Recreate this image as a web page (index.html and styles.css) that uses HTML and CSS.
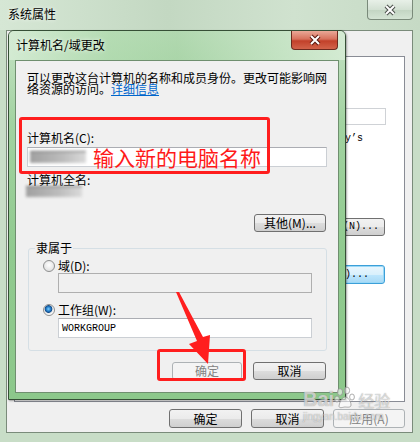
FILE: index.html
```html
<!DOCTYPE html>
<html lang="zh-CN">
<head>
  <meta charset="UTF-8" />
  <title>计算机名/域更改</title>
  <link rel="stylesheet" href="styles.css">
</head>
<body>
  <div class="win">
    <div class="win-title">
      <span>系统属性</span>
      <div class="close-btn grey">
        <svg width="14" height="12" viewBox="0 0 14 12"><path d="M3 2 L11 10 M11 2 L3 10" stroke="#4a4f4a" stroke-width="4"/><path d="M3 2 L11 10 M11 2 L3 10" stroke="#fff" stroke-width="2"/></svg>
      </div>
    </div>

    <div class="win-client">
      <div class="tab-page">
        <div class="tp-box"></div>
        <div class="tp-text">party’s</div>
        <div class="tp-btn">(N)...</div>
        <div class="tp-btn focus">(C)...</div>
      </div>
      <div class="win-buttons">
        <div class="btn w73">确定</div>
        <div class="btn w73">取消</div>
        <div class="btn w72 off">应用(A)</div>
      </div>
    </div>

    <div class="dlg">
      <div class="dlg-title">
        <span>计算机名/域更改</span>
        <div class="close-btn red">
          <svg width="14" height="12" viewBox="0 0 14 12"><path d="M3 2 L11 10 M11 2 L3 10" stroke="#5a1a10" stroke-width="4"/><path d="M3 2 L11 10 M11 2 L3 10" stroke="#fff" stroke-width="2"/></svg>
        </div>
      </div>
      <div class="dlg-client">
        <p class="desc">可以更改这台计算机的名称和成员身份。更改可能影响网<br>络资源的访问。<a class="link">详细信息</a></p>

        <div class="label first">计算机名(C):</div>
        <div class="tb name"><span class="blur"></span></div>

        <div class="label second">计算机全名:</div>
        <div class="blur full"></div>

        <div class="row-right">
          <div class="btn w72">其他(M)...</div>
        </div>

        <fieldset class="group">
          <legend>隶属于</legend>
          <div class="radio-row r1"><span class="radio"></span>域(D):</div>
          <div class="tb off domain"></div>
          <div class="radio-row r2"><span class="radio checked"></span>工作组(W):</div>
          <div class="tb domain wg">WORKGROUP</div>
        </fieldset>

        <div class="row-right bottom">
          <div class="btn w70 off">确定</div>
          <div class="btn w73">取消</div>
        </div>
      </div>
    </div>

    <!-- annotations -->
    <div class="mark m1"></div>
    <div class="mark m2"></div>
    <div class="hint">输入新的电脑名称</div>
    <svg class="arrow" width="420" height="442" viewBox="0 0 420 442">
      <polygon points="176,292 179,292 203,337 210,335 208,364 189,344 197,341" fill="#ff1e1e"/>
    </svg>

    <div class="wm">
      <div class="wm-top">
        <span class="wm-bai">Bai</span>
        <svg width="22" height="24" viewBox="0 0 22 24">
          <g fill="rgba(255,255,255,0.55)" stroke="rgba(140,140,140,0.7)" stroke-width="1">
            <ellipse cx="6" cy="6" rx="2.6" ry="3.4"/>
            <ellipse cx="13" cy="4.5" rx="2.6" ry="3.4"/>
            <ellipse cx="3" cy="13" rx="2.4" ry="3"/>
            <ellipse cx="18" cy="11" rx="2.4" ry="3"/>
            <path d="M5 20 C6 14 9 11 11 11 C14 11 17 15 17 19 C17 22 13 21 11 21 C9 21 5 23 5 20 Z"/>
          </g>
        </svg>
        <span class="wm-jy">经验</span>
      </div>
      <div class="wm-url">jingyan.baidu.com</div>
    </div>
  </div>
</body>
</html>
```

FILE: styles.css
```css
body {
  margin: 0;
  width: 420px;
  height: 442px;
  overflow: hidden;
  font-family: "Noto Sans CJK SC", "Noto Sans", sans-serif;
  font-size: 12px;
  color: #000;
}

.win {
  position: relative;
  width: 420px;
  height: 442px;
  background: #c8ddc7;
  display: flex;
  flex-direction: column;
}

.win-title {
  height: 30px;
  flex: none;
  display: flex;
  justify-content: space-between;
  align-items: flex-start;
  padding-left: 8px;
  background: linear-gradient(90deg, #d6e7d5, #c3d8c2 40%, #d0e2cf 70%, #c6dac5);
}

.win-title span,
.dlg-title span {
  line-height: 12px;
  margin-top: 8px;
  text-shadow: 0 0 4px rgba(255, 255, 255, 0.9);
}

.close-btn {
  box-sizing: border-box;
  display: flex;
  align-items: center;
  justify-content: center;
  border-radius: 0 0 4px 4px;
}

.close-btn.grey {
  width: 46px;
  height: 20px;
  margin-right: 7px;
  border: 1px solid #7a8a7a;
  border-top: none;
  background: linear-gradient(#e8f0e8, #d3e1d3 50%, #c2d4c2 51%, #d4e4d4);
}

.close-btn.red {
  width: 47px;
  height: 19px;
  margin-right: 7px;
  border: 1px solid #6b2a1e;
  border-top: none;
  background: linear-gradient(#eaa897, #d7715c 45%, #c2412a 55%, #d2634a);
}

.win-client {
  flex: 1;
  margin: 0 7px 9px 6px;
  border: 1px solid #7a8b7a;
  background: #f0f0f0;
  display: flex;
  flex-direction: column;
}

.tab-page {
  margin: 25px 7px 0 7px;
  height: 344px;
  border: 1px solid #898c95;
  background: #fff;
  display: flex;
  flex-direction: column;
  align-items: flex-end;
}

.tp-box {
  width: 120px;
  height: 17px;
  box-sizing: border-box;
  margin: 51px 18px 0 0;
  border: 1px solid #cfd2d6;
}

.tp-text {
  margin: 8px 41px 0 0;
  font-family: "Liberation Mono", monospace;
  font-size: 10px;
  line-height: 12px;
}

.tp-btn {
  box-sizing: border-box;
  width: 80px;
  height: 18px;
  margin: 73px 19px 0 0;
  padding-right: 5px;
  display: flex;
  align-items: center;
  justify-content: flex-end;
  border: 1px solid #707070;
  border-radius: 3px;
  background: linear-gradient(#f2f2f2, #ebebeb 50%, #dddddd 51%, #cfcfcf);
  font-family: "Liberation Mono", monospace;
  font-size: 10px;
  line-height: 12px;
}

.tp-btn.focus {
  height: 19px;
  margin-top: 29px;
  padding-right: 15px;
  border-color: #3c9fd8;
  box-shadow: inset 0 0 0 1px #9ad8f7;
  background: linear-gradient(#eaf6fd, #d9f0fc 50%, #bee6fd 51%, #a7d9f5);
}

.win-buttons {
  display: flex;
  justify-content: flex-end;
  gap: 9px;
  margin: 7px 7px 0 0;
}

.btn {
  box-sizing: border-box;
  height: 19px;
  display: flex;
  align-items: center;
  justify-content: center;
  border: 1px solid #707070;
  border-radius: 3px;
  background: linear-gradient(#f2f2f2, #ebebeb 50%, #dddddd 51%, #cfcfcf);
  line-height: 12px;
}

.btn.off {
  border-color: #adb2b5;
  background: #f4f4f4;
  color: #838383;
}

.w70 { width: 70px; }
.w72 { width: 72px; }
.w73 { width: 73px; }

.dlg {
  position: absolute;
  left: 8px;
  top: 30px;
  width: 338px;
  height: 370px;
  box-sizing: border-box;
  padding: 0 6px 6px;
  border: 1px solid #364f36;
  border-radius: 6px 6px 0 0;
  background: linear-gradient(#c6e2c5, #a2d3a1 25%, #90ca8f 60%, #8cc88b);
  box-shadow: 1px 1px 2px rgba(0, 0, 0, 0.35);
  display: flex;
  flex-direction: column;
}

.dlg-title {
  height: 29px;
  flex: none;
  margin: 0 -6px;
  padding-left: 7px;
  display: flex;
  justify-content: space-between;
  align-items: flex-start;
  border-radius: 5px 5px 0 0;
  background: linear-gradient(90deg, rgba(214, 236, 213, 0.9), rgba(170, 216, 168, 0.6) 30%, rgba(146, 201, 144, 0.4) 50%, rgba(196, 227, 195, 0.7) 78%, rgba(214, 236, 213, 0.9));
}

.dlg-client {
  flex: 1;
  background: #f0f0f0;
  border: 1px solid #6f8f6f;
  padding: 11px 12px 0 11px;
  display: flex;
  flex-direction: column;
}

.desc {
  margin: 0;
  line-height: 11px;
  white-space: nowrap;
}

.link {
  color: #0066cc;
  text-decoration: underline;
}

.label {
  line-height: 12px;
}

.label.first { margin-top: 38px; }
.label.second { margin-top: 7px; }

.tb {
  box-sizing: border-box;
  height: 20px;
  border: 1px solid #cbcfd4;
  border-top-color: #abadb3;
  background: #fff;
  display: flex;
  align-items: center;
}

.tb.name {
  width: 300px;
  margin-top: 3px;
}

.blur {
  display: block;
  width: 56px;
  height: 11px;
  margin-left: 2px;
  background: linear-gradient(90deg, #a0a0a0, #bdbdbd 60%, #dadada);
  filter: blur(1.6px);
  border-top: 1px solid #666;
}

.blur.full {
  margin-left: -1px;
  margin-top: 0;
  height: 10px;
}

.row-right {
  display: flex;
  justify-content: flex-end;
  margin-top: 17px;
}

.row-right .btn { height: 18px; }

.row-right.bottom {
  gap: 11px;
  margin-top: 11px;
}

.group {
  box-sizing: border-box;
  width: 299px;
  min-width: 0;
  margin: 10px 0 0 1px;
  padding: 0 0 12px 14px;
  border: 1px solid #d5dfe5;
  border-radius: 3px;
}

.group legend {
  margin-left: -8px;
  padding: 0 1px;
  line-height: 12px;
}

.radio-row {
  display: flex;
  align-items: center;
  gap: 3px;
  height: 14px;
  line-height: 12px;
}

.radio-row.r1 { margin-top: 5px; }
.radio-row.r2 { margin-top: 10px; }

.radio {
  box-sizing: border-box;
  width: 12px;
  height: 12px;
  border: 1px solid #8e8f8f;
  border-radius: 50%;
  background: radial-gradient(circle at 50% 40%, #fff, #d8d8d8);
}

.radio.checked {
  background: radial-gradient(circle at 45% 40%, #7fd0ff 0, #2b86d0 2px, #124c8c 3.5px, #e6e6e6 4.2px, #fff 6px);
}

.tb.domain {
  width: 254px;
  margin-left: 15px;
}

.tb.off {
  background: #f0f0f0;
  border-color: #afafaf;
}

.tb.wg {
  margin-top: 1px;
  padding-left: 3px;
  font-family: "Liberation Mono", monospace;
  font-size: 10px;
}

.mark {
  position: absolute;
  box-sizing: border-box;
  border: 3px solid #ff1e1e;
  border-radius: 3px;
}

.m1 { left: 19px; top: 117px; width: 251px; height: 57px; }
.m2 { left: 157px; top: 349px; width: 89px; height: 32px; }

.hint {
  position: absolute;
  left: 93px;
  top: 145px;
  font-size: 21px;
  line-height: 24px;
  color: #ff1a1a;
}

.arrow {
  position: absolute;
  left: 0;
  top: 0;
  pointer-events: none;
}

.wm {
  position: absolute;
  left: 303px;
  top: 386px;
  color: rgba(255, 255, 255, 0.6);
  text-shadow: 0 0 1px rgba(110, 110, 110, 0.8);
  pointer-events: none;
}

.wm-top {
  display: flex;
  align-items: flex-end;
}

.wm-bai {
  font-family: "Liberation Sans", sans-serif;
  font-weight: bold;
  font-size: 20px;
  line-height: 22px;
}

.wm-jy {
  font-size: 16px;
  line-height: 20px;
  margin-left: 2px;
}

.wm-url {
  font-family: "Liberation Sans", sans-serif;
  font-size: 10px;
  line-height: 12px;
  margin-top: 1px;
}
```
